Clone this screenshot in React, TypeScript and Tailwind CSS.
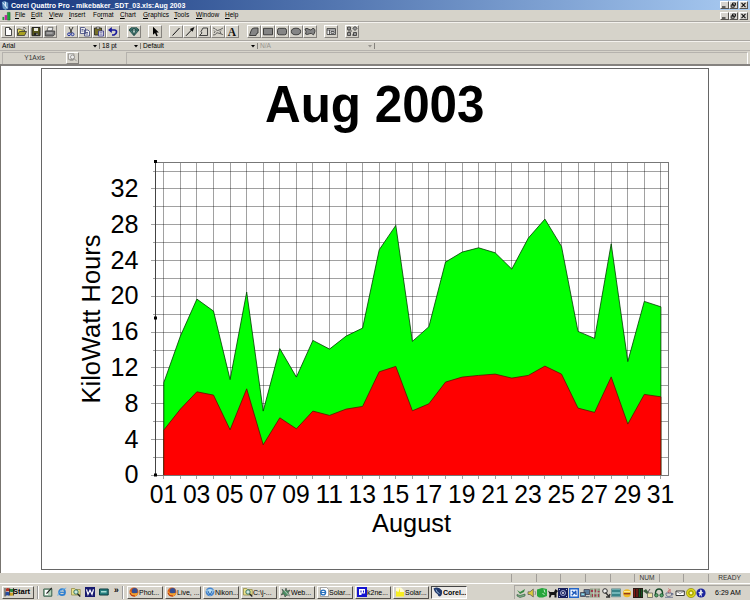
import type { ReactNode } from 'react';

const total = [
  10.36, 15.55, 19.69, 18.35, 10.69, 20.47, 7.17, 14.16, 10.97, 15.07, 14.1, 15.55, 16.45, 25.2, 27.92, 14.96,
  16.6, 23.82, 24.94, 25.42, 24.86, 23.04, 26.5, 28.63, 25.57, 16.08, 15.3, 25.87, 12.7, 19.43, 18.83,
];
const base = [
  5.05, 7.4, 9.33, 8.96, 5.08, 9.67, 3.41, 6.42, 5.2, 7.17, 6.69, 7.4, 7.7, 11.56, 12.17, 7.21,
  7.99, 10.41, 10.97, 11.16, 11.31, 10.86, 11.16, 12.2, 11.31, 7.51, 7.03, 11.0, 5.72, 9.04, 8.77,
];

const menus = [
  { label: 'File', w: 'w-[16px]' },
  { label: 'Edit', w: 'w-[18px]' },
  { label: 'View', w: 'w-[20px]' },
  { label: 'Insert', w: 'w-[24px]' },
  { label: 'Format', w: 'w-[27px]' },
  { label: 'Chart', w: 'w-[23px]' },
  { label: 'Graphics', w: 'w-[31px]' },
  { label: 'Tools', w: 'w-[22px]' },
  { label: 'Window', w: 'w-[29px]' },
  { label: 'Help', w: 'w-[20px]' },
];

// All toolbar glyphs are drawn in a 12x11 box
const toolGroups: { gap: string; icons: ReactNode[] }[] = [
  {
    gap: 'ml-px',
    icons: [
      <path key="new" d="M3.5 1.5h4l2 2v6h-6zM7.5 1.5v2h2" fill="#fff" stroke="#222" strokeWidth=".8" />,
      <g key="open">
        <path d="M1.5 9.5V3h3l1 1h3v1.5" fill="#e8e060" stroke="#333" strokeWidth=".8" />
        <path d="M1.5 9.5l2-4h7l-2 4z" fill="#a8a020" stroke="#333" strokeWidth=".8" />
        <path d="M7 2q2-1.5 3 .8" fill="none" stroke="#333" strokeWidth=".8" />
      </g>,
      <g key="save">
        <path d="M2 1.5h8v8.2H2z" fill="#55551a" stroke="#222" />
        <path d="M4 2h4v3H4z" fill="#e8e8e0" />
        <path d="M4 7h4v2.5H4z" fill="#222" />
        <path d="M6.5 7.5h1v1.5h-1z" fill="#ddd" />
      </g>,
      <g key="print">
        <path d="M4 1.3h5L8 5H3z" fill="#eee" stroke="#444" strokeWidth=".7" />
        <path d="M1.3 5h9.4v3.5l-1.5 1.5H1.3z" fill="#777" stroke="#333" strokeWidth=".8" />
        <path d="M2.5 7h6" stroke="#ddd" strokeWidth=".8" />
      </g>,
    ],
  },
  {
    gap: 'ml-[7px]',
    icons: [
      <g key="cut" fill="none" strokeWidth="1">
        <path d="M4 1l3 6M8 1L5 7" stroke="#333" />
        <circle cx="4" cy="8.3" r="1.4" stroke="#2233a0" />
        <circle cx="7.6" cy="8.3" r="1.4" stroke="#2233a0" />
      </g>,
      <g key="copy" stroke="#38407a" strokeWidth=".8" fill="#eee">
        <path d="M1.5 1.5h4l1 1v5h-5zM5.5 4h3.5l1.5 1.5V10h-5z" />
        <path d="M2.5 3.5h2M2.5 5h2M6.5 6.5h2.5M6.5 8h2.5" />
      </g>,
      <g key="paste">
        <path d="M1.5 2h7v7h-7z" fill="#777028" stroke="#222" strokeWidth=".8" />
        <path d="M3.5 1h3v2h-3z" fill="#ccc" stroke="#222" strokeWidth=".5" />
        <path d="M5.5 5h5v5h-5z" fill="#eee" stroke="#30308a" strokeWidth=".8" />
        <path d="M6.5 6.7h3M6.5 8.2h3" stroke="#30308a" strokeWidth=".6" />
      </g>,
      <g key="undo">
        <path d="M3 4h4.5q2 0 2 2T7 9H5" fill="none" stroke="#18189a" strokeWidth="1.7" />
        <path d="M1 4l3.8-3v6z" fill="#18189a" />
      </g>,
    ],
  },
  {
    gap: 'ml-[7px]',
    icons: [
      <g key="perfect" stroke="#16403c" strokeWidth=".8">
        <path d="M1 4l2-2.2h6L11 4 6 9.8z" fill="#49817b" />
        <path d="M1 4h10M4 4l2 5 2-5-2-2-2 2" fill="#b7d0c8" />
      </g>,
    ],
  },
  { gap: 'ml-[7px]', icons: [<path key="ptr" d="M4 .8v8l2-1.7 1.4 3.2 1.4-.6-1.4-3.1h2.5z" fill="#000" />] },
  {
    gap: 'ml-[7px]',
    icons: [
      <path key="line" d="M2.5 9.5l7-7.5" stroke="#111" />,
      <g key="arrow">
        <path d="M2 9.8l6-6.3" stroke="#111" />
        <path d="M10.5 1L5.8 3l2.8 2.8z" fill="#111" />
      </g>,
      <path key="poly" d="M1.5 9.5l2.500-2.500-1-1.500L5 2h4.500v7.500z" fill="none" stroke="#333" strokeWidth=".9" />,
      <path key="free" d="M1 2q2 0 3 1.700t4 0L11 2M1 9q3 0 3-1.500t4 0T11 9M9 4.500q-2 1 0 3M2 4.500q2 1 0 2.500" fill="none" stroke="#444" strokeWidth=".8" />,
      <text key="text" x="6" y="9.7" textAnchor="middle" fontFamily="Liberation Serif, serif" fontSize="11.5" fontWeight="bold" fill="#111">A</text>,
    ],
  },
  {
    gap: 'ml-[8px]',
    icons: [
      <path key="fpoly" d="M1.5 9.5L3 5q.8-3 3-3h4v5q-2 0-2 2.5z" fill="#858585" stroke="#333" strokeWidth=".9" />,
      <path key="frect" d="M1.5 2.3h9v6.5h-9z" fill="#858585" stroke="#333" strokeWidth=".9" />,
      <rect key="fround" x="1.5" y="2.3" width="9" height="6.5" rx="2" fill="#858585" stroke="#333" strokeWidth=".9" />,
      <ellipse key="fell" cx="6" cy="5.5" rx="4.6" ry="3.3" fill="#858585" stroke="#333" strokeWidth=".9" />,
      <path key="ffree" d="M1 3q2-1.5 4 .4t4-1.2Q11.5 3 11 5.2T9.5 8.8Q7 6.5 5.2 7.8T1.5 8Q3 6 1 3z" fill="#858585" stroke="#333" strokeWidth=".9" />,
    ],
  },
  {
    gap: 'ml-[7px]',
    icons: [
      <g key="leg" fill="#eee" stroke="#333" strokeWidth=".8">
        <path d="M2 2.5h8.5v6H2z" />
        <path d="M2 4h8.5M4.5 4v4.5M6 5.5h3.2v1.8H6z" />
      </g>,
    ],
  },
  {
    gap: 'ml-[7px]',
    icons: [
      <g key="tools" fill="#999" stroke="#333" strokeWidth=".8">
        <path d="M1.5 1h3v2.8h-3zM1.5 6.5h3v3h-3zM7.5 6.5h3v3h-3zM6.8 2.3L9 .5l2.2 1.8L9 4.5zM2 5h4M6 9h2" />
      </g>,
    ],
  },
];

const Ico = ({ children, size = 'w-[10px] h-[10px]' }: { children: ReactNode; size?: string }) => (
  <svg viewBox="0 0 10 10" className={`${size} shrink-0`}>{children}</svg>
);

const Firefox = () => (
  <Ico>
    <circle cx="5" cy="5" r="4.5" fill="#d85c1a" />
    <circle cx="5.7" cy="4" r="2.9" fill="#344f94" />
    <path d="M.8 3q1 3.5 4.2 3.2T9 6Q8 9.5 5 9.5 1 9 .8 3z" fill="#f0a030" />
    <path d="M1 6q1 3.5 5 3" fill="none" stroke="#b83210" />
  </Ico>
);
const Ie = () => (
  <Ico>
    <circle cx="5" cy="5.2" r="3" fill="none" stroke="#2f7fd0" strokeWidth="1.7" />
    <path d="M2.5 5.3h5.8" stroke="#2f7fd0" strokeWidth="1.2" />
    <path d="M.8 8.8Q1 4 9.2 1" fill="none" stroke="#68aee8" strokeWidth=".9" />
  </Ico>
);
const FolderSearch = () => (
  <Ico>
    <path d="M.5 1.5h3.2l1 1h4.5v5.5H.5z" fill="#ece38e" stroke="#8a8238" strokeWidth=".7" />
    <circle cx="5" cy="5" r="2.2" fill="#cfe9df" stroke="#286858" strokeWidth=".9" />
    <path d="M6.5 6.7l2.8 2.8" stroke="#222" strokeWidth="1.3" />
  </Ico>
);

const quick = [
  <Ico key="desk">
    <path d="M.8 2h8v7.2h-8z" fill="#b5d3ba" stroke="#345c4a" />
    <path d="M2 3h3v5H2z" fill="#fff" />
    <path d="M3.5 6.7L8.8.8" stroke="#222" strokeWidth="1.2" />
  </Ico>,
  <Ie key="ie" />,
  <FolderSearch key="fs" />,
  <Ico key="word">
    <path d="M0 0h10v10H0z" fill="#17196f" />
    <path d="M1.5 2.4l1.5 5 2-4.2 2 4.2 1.5-5" fill="none" stroke="#fff" strokeWidth="1.2" />
  </Ico>,
  <Ico key="term">
    <path d="M.5 2h8.7v6H.5z" fill="#267f80" stroke="#0b3c40" />
    <path d="M2 4h5.5v1.5H2z" fill="#a6dcd5" />
  </Ico>,
];

const tasks = [
  { label: 'Phot...', icon: <Firefox /> },
  { label: 'Live, ...', icon: <Firefox /> },
  {
    label: 'Nikon...',
    icon: (
      <Ico>
        <circle cx="5" cy="4.8" r="4.4" fill="#4686cf" />
        <path d="M1 3.5q4-3 8 0L5 9z" fill="#b9dff4" />
        <path d="M2.7 3.7L5 8l2.2-4.3" fill="none" stroke="#205da8" strokeWidth="1" />
      </Ico>
    ),
  },
  { label: 'C:\\j-...', icon: <FolderSearch /> },
  {
    label: 'Web...',
    icon: (
      <Ico>
        <path d="M1 2l3 2 1-3 1 3 3-1-2 3 2 3-3-1-2 2-1-3-3 1 2-3z" fill="#4c8d62" stroke="#333" strokeWidth=".5" />
        <path d="M1 1l7.5 8" stroke="#d5dfd9" strokeWidth=".8" />
      </Ico>
    ),
  },
  {
    label: 'Solar...',
    icon: (
      <Ico>
        <path d="M1.5.5h6l2 2v7h-8z" fill="#fff" stroke="#777" strokeWidth=".6" />
        <circle cx="4.2" cy="5.5" r="2.4" fill="none" stroke="#2870bd" strokeWidth="1.4" />
        <path d="M2 5.5h4.5" stroke="#2870bd" />
      </Ico>
    ),
  },
  {
    label: 'k2ne...',
    icon: (
      <Ico>
        <path d="M0 0h10v10H0z" fill="#1414d0" />
        <path d="M2 2h6v4.5H4.5V8H2z" fill="#fff" />
        <path d="M3.5 3.5h1v2h-1zM6 3.5h1v2H6z" fill="#1414d0" />
      </Ico>
    ),
  },
  {
    label: 'Solar...',
    icon: (
      <Ico>
        <path d="M1 .5h5l3 3v6H1z" fill="#fffbd0" />
        <path d="M1 4l2.5 1L5 1v4h4v4.5H1z" fill="#f8ee22" />
      </Ico>
    ),
  },
  {
    label: 'Corel...',
    icon: (
      <Ico>
        <path d="M.5 1.500q5-2.500 8.500 2Q9.500 8.500 7 9.500 5 9.500 4.500 7 2 6 .5 1.500z" fill="#20386b" />
        <path d="M3 2.500q.5 3 3.500 4" fill="none" stroke="#9fc0e0" strokeWidth=".9" />
      </Ico>
    ),
  },
];

const tray = [
  <Ico key="eject">
    <path d="M1 2l3 2 5-3-1 3-4 2z" fill="#378a42" />
    <path d="M1 6.5l3 1 5-1.5v2L4 9.5 1 8z" fill="#7fb088" stroke="#2a5635" strokeWidth=".6" />
  </Ico>,
  <Ico key="vol">
    <path d="M1 3.8h2L6.3 1v8L3 6.5H1z" fill="#d9ca3e" stroke="#555" strokeWidth=".7" />
    <path d="M8 3q1.5 2 0 4" fill="none" stroke="#777" strokeWidth=".7" />
  </Ico>,
  <Ico key="green">
    <path d="M0 1.500l5-1.500 5 1v7L6 9.500H2L0 8z" fill="#27a53c" />
    <path d="M5.5 5l2 2M7 1.5l1 3" stroke="#c6f0ca" strokeWidth="1" />
  </Ico>,
  <Ico key="dog">
    <path d="M0 2.5l2 1.5h4l1.5-3L10 3 8.5 5v4.5h-2V7h-3l-1 2.5H1L1.5 6z" fill="#151515" />
  </Ico>,
  <Ico key="navy">
    <path d="M0 0h10v10H0z" fill="#18205c" />
    <circle cx="5" cy="5" r="2.5" fill="none" stroke="#c0caee" strokeWidth=".8" />
    <circle cx="5" cy="5" r=".9" fill="#fff" />
    <path d="M1 1l1 1M9 1L8 2M1 9l1-1M9 9L8 8" stroke="#a8b7ee" />
  </Ico>,
  <Ico key="blue">
    <path d="M.5.5h9v9h-9z" fill="#eef4ff" stroke="#2364c8" strokeWidth="1.8" />
    <path d="M2.8 7.2l4.5-4.5M3 3l2 2h2v2" fill="none" stroke="#1c57b8" strokeWidth="1.3" />
  </Ico>,
  <Ico key="net">
    <path d="M4 1.5h5.5v5H4zM.5 4.5h5v4h-5z" fill="#5d7d9c" stroke="#334" strokeWidth=".7" />
    <path d="M1.5 5.5h3v1.5h-3z" fill="#8fdfed" />
    <path d="M6 8.8h3.5" stroke="#345" />
  </Ico>,
  <Ico key="grid">
    <path d="M0 .5h10v9H0z" fill="#8e9c82" />
    <path d="M1 2h2v2H1zM5 1.5h1v3H5zM7.5 3h2v1.5h-2zM2 6h1v3H2zM4.5 6.5h2v2h-2zM8 6h1v3H8z" fill="#a3384d" />
    <path d="M3.5.5v9M7 .5v9M0 5h10" stroke="#dcd6ce" strokeWidth=".6" />
  </Ico>,
  <Ico key="mag">
    <circle cx="4" cy="3" r="2.3" fill="#eee" stroke="#333" />
    <path d="M4.5 4.5L9 9.5M5 9h3l1-3" stroke="#333" strokeWidth="1.3" fill="none" />
  </Ico>,
  <Ico key="teal">
    <path d="M.5.8h9v8h-9z" fill="#72b5b8" stroke="#547579" strokeWidth=".6" />
    <path d="M1 3h8M1 7h8" stroke="#267479" strokeWidth="1.3" />
  </Ico>,
  <Ico key="smile">
    <circle cx="5" cy="5.2" r="4" fill="#eebc29" />
    <path d="M1.8 5.7h6.4" stroke="#973819" strokeWidth="1.4" />
    <path d="M2 3.6h6" stroke="#fff09c" />
  </Ico>,
  <Ico key="meter">
    <path d="M0 0h10v10H0z" fill="#261915" />
    <path d="M1.3 1v8M4 1v8" stroke="#901e16" strokeWidth="1.2" />
    <path d="M6.5 1v8M8.7 1v8" stroke="#165822" strokeWidth="1.2" />
  </Ico>,
  <Ico key="tag">
    <path d="M0 3l3-2 3 4-2 1z" fill="#3e5f3e" />
    <path d="M4.5 5h5v4.5h-5z" fill="#eee6aa" stroke="#555" strokeWidth=".7" />
    <path d="M5 4l2-3" stroke="#555" />
  </Ico>,
  <Ico key="phones">
    <path d="M1.5 7V4.5Q2 1 5 1t3.5 3.5V7" fill="none" stroke="#174b29" strokeWidth="1.4" />
    <circle cx="2.4" cy="7.3" r="1.7" fill="#5ba56b" stroke="#174b29" strokeWidth=".8" />
    <circle cx="7.6" cy="7.3" r="1.7" fill="#5ba56b" stroke="#174b29" strokeWidth=".8" />
  </Ico>,
  <Ico key="java">
    <path d="M4.5.5q2 1.3 0 2.5t1 2M6.5 1.5q-1.5 1.5 0 3" fill="none" stroke="#c64545" strokeWidth=".8" />
    <path d="M2 5h5.5v2Q7 8.5 4.8 8.5T2 7zM1 9.3h8M7.5 5.5h1.5v1.3H7.5" fill="none" stroke="#5c6688" strokeWidth=".8" />
  </Ico>,
  <Ico key="mail">
    <path d="M1 3h8.3v4.5H1z" fill="#fff" stroke="#222" strokeWidth=".9" />
    <path d="M1.3 3.3L5 5.5l4-2.2" fill="none" stroke="#444" strokeWidth=".6" />
  </Ico>,
  <Ico key="disc">
    <circle cx="5" cy="5" r="4.6" fill="#ded914" stroke="#8f8b12" strokeWidth=".7" />
    <circle cx="5" cy="5" r="2.3" fill="none" stroke="#807c14" strokeWidth=".8" />
    <circle cx="5" cy="5" r="1" fill="#fff" />
  </Ico>,
  <Ico key="aim">
    <circle cx="5" cy="5" r="4.6" fill="#1b249c" />
    <path d="M4.3 1.5q2 0 1.5 2L7.5 5l-2 .5L6 9 4.5 7 3 8.5l.6-3L2 4.5l2-.7z" fill="#e9e9ee" />
  </Ico>,
];

function WindowButtons() {
  return (
    <div className="flex items-center">
      {['min', 'restore', 'close'].map((kind) => (
        <div
          key={kind}
          className={`flex h-[8px] w-[9px] border border-t-white border-l-white border-r-[#56534f] border-b-[#56534f] bg-[#d6d3ce] ${kind === 'close' ? 'ml-px' : ''}`}
        >
          <svg viewBox="0 0 7 6" className="h-[6px] w-[7px]" fill="none" stroke="#111">
            {kind === 'min' && <path d="M1 5h3.5" strokeWidth="1.2" />}
            {kind === 'restore' && <path d="M2.5 1h3v2.3h-3zM1.2 2.8h3v2.4h-3z" strokeWidth=".9" />}
            {kind === 'close' && <path d="M1.5.8l4 4.4M5.5.8l-4 4.4" strokeWidth="1.1" />}
          </svg>
        </div>
      ))}
    </div>
  );
}

function Arrow() {
  return (
    <svg viewBox="0 0 4 3" className="h-[3px] w-[4px]" fill="currentColor">
      <path d="M0 0h4L2 2.5z" />
    </svg>
  );
}

function Chart() {
  const x = (i: number) => 163.8 + i * 16.57;
  const y = (v: number) => 475.3 - v * 8.95;
  const snap = (n: number) => Math.floor(n) + 0.5;
  const line = (vals: number[]) => vals.map((v, i) => `${x(i).toFixed(1)},${y(v).toFixed(1)}`).join(' ');
  const area = (vals: number[]) => `${x(0)},475.5 ${line(vals)} ${x(30)},475.5`;

  // Viewbox keeps window coordinates so that the sheet starts at (42, 69)
  return (
    <svg viewBox="42 69 666 500" className="block h-[500px] w-[666px]" fontFamily="Liberation Sans, Arial, sans-serif">
      <text x="265" y="122" fontSize="51.5" fontWeight="bold" textLength="219.5" lengthAdjust="spacingAndGlyphs">Aug 2003</text>
      <g stroke="#000" strokeOpacity=".37" shapeRendering="crispEdges">
        {total.map((_, i) => (
          <line key={i} x1={snap(x(i))} x2={snap(x(i))} y1="162" y2="479" />
        ))}
        {Array.from({ length: 18 }, (_, k) => (
          <line key={k} x1={k % 2 ? 153 : 151} x2="668" y1={snap(y(k * 2))} y2={snap(y(k * 2))} />
        ))}
      </g>
      <polygon points={area(total)} fill="#00ff00" stroke="#003c00" strokeWidth=".8" />
      <polygon points={area(base)} fill="#ff0000" stroke="#5c1400" strokeWidth=".8" />
      <path d="M155.5 162.5H668.5V475.5H155.5z" fill="none" stroke="#777" shapeRendering="crispEdges" />
      <path d="M155.5 162V476" stroke="#444" shapeRendering="crispEdges" />
      <g fill="#000">
        <rect x="154" y="160" width="3" height="3" />
        <rect x="154" y="316.5" width="3" height="3" />
        <rect x="154" y="473.5" width="3" height="3" />
      </g>
      <g fontSize="25">
        {[0, 4, 8, 12, 16, 20, 24, 28, 32].map((v) => (
          <text key={v} x="138.5" y={y(v) + 8} textAnchor="end" textLength={v < 10 ? 14 : 28} lengthAdjust="spacingAndGlyphs">{v}</text>
        ))}
        {total.map((_, i) =>
          i % 2 ? null : (
            <text key={i} x={x(i) - 0.3} y="502.5" textAnchor="middle" textLength="27.5" lengthAdjust="spacingAndGlyphs">
              {String(i + 1).padStart(2, '0')}
            </text>
          ),
        )}
        <text x="372" y="532" textLength="79" lengthAdjust="spacingAndGlyphs">August</text>
        <text transform="translate(100 403.5) rotate(-90)" textLength="169" lengthAdjust="spacingAndGlyphs">KiloWatt Hours</text>
      </g>
    </svg>
  );
}

export default function App() {
  return (
    <div className="flex h-[600px] w-[750px] flex-col overflow-hidden bg-[#d6d3ca] font-['Liberation_Sans',Arial,sans-serif] text-[7px] leading-none text-black">
      <header className="flex h-[10px] shrink-0 items-center bg-linear-to-r from-[#16357c] to-[#a9cbf2] pr-[2px] pl-px text-white">
        <Ico size="w-[9px] h-[9px]">
          <path d="M1 1l3-1 4 2v6L5 10 2 8z" fill="#6b9bc8" />
          <path d="M2 2l5 6M5 1v5" stroke="#e8f2ff" />
        </Ico>
        <span className="ml-px w-[176px] text-[7px] font-bold whitespace-nowrap">Corel Quattro Pro - mikebaker_SDT_03.xls:Aug 2003</span>
        <div className="ml-auto"><WindowButtons /></div>
      </header>

      <nav className="flex h-[12px] shrink-0 items-center border-b border-[#aaa7a2] pr-[2px] pl-[2px]">
        <svg viewBox="0 0 10 10" className="h-[10px] w-[9px]">
          <path d="M.5 6h2v3.5h-2z" fill="#229b3b" />
          <path d="M3 4h2.5v5.5H3z" fill="#bd26a0" />
          <path d="M6 1h3v8.5H6z" fill="#1da538" stroke="#174f26" strokeWidth=".5" />
        </svg>
        <div className="ml-[4px] flex">
          {menus.map((m) => (
            <span key={m.label} className={`${m.w} shrink-0 text-[6.5px] whitespace-nowrap`}>
              {m.label === 'Format' ? (
                <>Fo<u className="decoration-[0.5px] underline-offset-1">r</u>mat</>
              ) : (
                <><u className="decoration-[0.5px] underline-offset-1">{m.label[0]}</u>{m.label.slice(1)}</>
              )}
            </span>
          ))}
        </div>
        <div className="ml-auto"><WindowButtons /></div>
      </nav>

      <div className="flex h-[19px] shrink-0 items-center border-t border-b border-t-[#f4f2ee] border-b-[#aaa7a2]">
        {toolGroups.map((g, gi) => (
          <div key={gi} className={`flex ${g.gap}`}>
            {g.icons.map((icon, i) => (
              <div key={i} className="h-[13px] w-[14px] border border-t-white border-r-[#85827d] border-b-[#85827d] border-l-white">
                <svg viewBox="0 0 12 11" className="h-[11px] w-[12px]" fill="none">{icon}</svg>
              </div>
            ))}
          </div>
        ))}
      </div>

      <div className="flex h-[10px] shrink-0 items-center border-t border-b border-t-[#f4f2ee] border-b-[#b5b2ad] text-[6.6px]">
        <div className="flex w-[100px] items-center justify-between border-r border-[#85827d] pr-[2px] pl-[2px]">
          <span>Arial</span>
          <Arrow />
        </div>
        <div className="flex w-[41px] items-center justify-between border-r border-[#85827d] pr-[2px] pl-[2px]">
          <span>18 pt</span>
          <Arrow />
        </div>
        <div className="flex w-[117px] items-center justify-between border-r border-[#85827d] pr-[2px] pl-[2px]">
          <span>Default</span>
          <Arrow />
        </div>
        <div className="flex w-[117px] items-center justify-between border-r border-[#85827d] pr-[2px] pl-[2px] text-[#96938e]">
          <span>N/A</span>
          <Arrow />
        </div>
      </div>

      <div className="flex h-[13px] shrink-0 items-center px-[2px]">
        <div className="flex h-[12px] w-[64px] items-center justify-center border-t border-l border-[#b5b2ad] text-[6.6px] text-[#333]">Y1Axis</div>
        <div className="flex h-[12px] w-[13px] items-center justify-center border border-t-white border-r-[#85827d] border-b-[#85827d] border-l-white">
          <svg viewBox="0 0 12 11" className="h-[11px] w-[12px]" fill="#eee" stroke="#8b8884" strokeWidth=".9">
            <path d="M1.5 1.5h6v6h-6z" />
            <circle cx="6" cy="5" r="2.2" />
            <path d="M7.5 6.5l3 3M3 8.5h4" />
          </svg>
        </div>
        <div className="ml-[47px] h-[12px] flex-1 border-t border-l border-[#b5b2ad] border-r border-r-white" />
      </div>

      <main className="flex h-[509px] shrink-0 border-t-2 border-l border-t-[#85827f] border-l-[#77746f] bg-white pt-[2px] pl-[40px]">
        <section className="h-[502px] w-[668px] border border-[#666]">
          <Chart />
        </section>
      </main>

      <div className="flex h-[10px] shrink-0 items-center justify-end text-[6.6px] text-[#333]">
        {['', '', '', '', '', 'NUM', '', '', ''].map((label, i) => (
          <div key={i} className={`flex h-[8px] items-center justify-center border-l border-[#a19e99] ${i < 8 ? 'w-[24.6px]' : 'w-[42px]'}`}>
            {i === 8 ? 'READY' : label}
          </div>
        ))}
      </div>

      <footer className="flex h-[17px] shrink-0 items-center border-t border-white pl-[2px]">
        <button className="flex h-[13px] w-[32px] items-center border border-t-white border-r-[#55524d] border-b-[#55524d] border-l-white pl-px text-[7.5px] font-bold">
          <Ico>
            <path d="M2 1.5q2-1 3.5 0v3Q4 3.5 2 4.5z" fill="#b33123" />
            <path d="M6 1.7q2 .8 3.5-.2v3q-1.500 1-3.500 0z" fill="#27843c" />
            <path d="M1.5 5.2q2-1 3.5 0v3.5q-1.500-1-3.500 0z" fill="#244aa0" />
            <path d="M5.7 5.5q2 .8 3.5-.2v3q-1.500 1-3.500 0z" fill="#c9a126" />
            <path d="M1 1v8.5M5.6 1.5v7M9.6 1v7.5" stroke="#111" strokeWidth=".8" fill="none" />
          </Ico>
          <span className="-ml-px">Start</span>
        </button>
        <div className="ml-[3px] h-[13px] w-[2px] border-r border-l border-r-white border-l-[#999]" />
        <div className="ml-[4px] flex gap-[4px]">{quick}</div>
        <span className="ml-[5px] w-[6px] pb-[4px] text-[8.5px] font-bold">»</span>
        <div className="ml-[2px] h-[13px] w-[2px] border-r border-l border-r-white border-l-[#999]" />
        <div className="ml-[3px] flex gap-[2px]">
          {tasks.map((t, i) => (
            <div
              key={i}
              className={`flex h-[13px] w-[36px] items-center overflow-hidden border pl-px text-[7px] whitespace-nowrap ${
                i === 8
                  ? 'border-t-[#444] border-r-white border-b-white border-l-[#444] bg-[#ebe9e5] font-bold'
                  : 'border-t-white border-r-[#55524d] border-b-[#55524d] border-l-white'
              }`}
            >
              {t.icon}
              <span>{t.label}</span>
            </div>
          ))}
        </div>
        <div className="ml-auto flex h-[14px] w-[236px] items-center border-t border-l border-[#aaa7a2] pl-px">
          <div className="flex gap-[0.6px]">{tray}</div>
          <span className="ml-[9px] text-[7px] whitespace-nowrap">6:29 AM</span>
        </div>
      </footer>
    </div>
  );
}
